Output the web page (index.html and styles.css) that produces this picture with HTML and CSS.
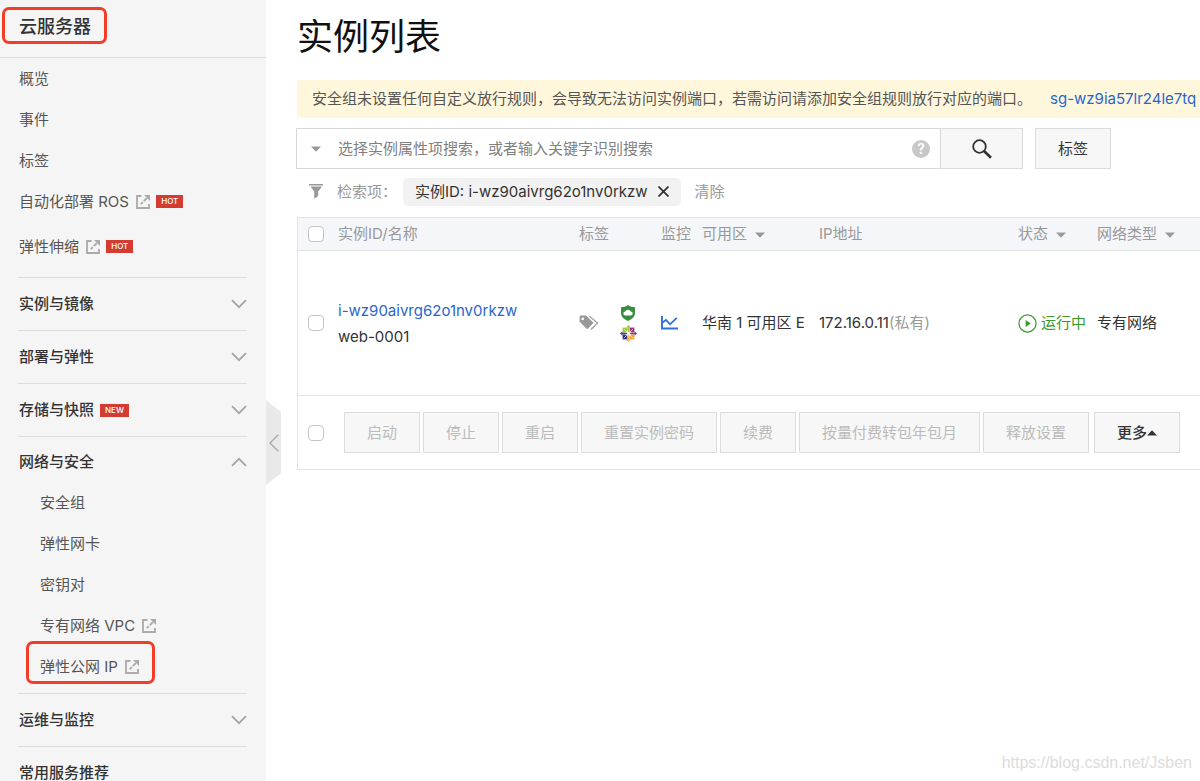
FILE: index.html
```html
<!DOCTYPE html>
<html lang="zh-CN">
<head>
<meta charset="utf-8">
<title>实例列表</title>
<link rel="stylesheet" href="styles.css">
</head>
<body>
<svg class="defs" aria-hidden="true">
  <symbol id="ext" viewBox="0 0 14 14"><path d="M5.500 1H1v12h12V9" fill="none" stroke="currentColor" stroke-width="1.800"/><path d="M4.800 9.200l2-2M7.800 6.200l3-3" fill="none" stroke="currentColor" stroke-width="1.900"/><path d="M8 0h6v6z" fill="currentColor"/></symbol>
  <symbol id="down" viewBox="0 0 16 10"><path d="M1 1.2l7 7 7-7" fill="none" stroke="currentColor" stroke-width="1.8"/></symbol>
  <symbol id="up" viewBox="0 0 16 10"><path d="M1 8.8l7-7 7 7" fill="none" stroke="currentColor" stroke-width="1.8"/></symbol>
  <symbol id="caret" viewBox="0 0 10 6"><path d="M0 .5h10L5 5.8z" fill="currentColor"/></symbol>
</svg>
<div class="app">
  <aside class="sidebar">
    <div class="side-title">云服务器</div>
    <nav class="side-nav" aria-label="云服务器">
      <ul class="menu">
        <li><a href="#">概览</a></li>
        <li><a href="#">事件</a></li>
        <li><a href="#">标签</a></li>
        <li><a href="#">自动化部署 ROS <svg class="ext"><use href="#ext"/></svg><span class="badge">HOT</span></a></li>
        <li class="spaced"><a href="#">弹性伸缩 <svg class="ext"><use href="#ext"/></svg><span class="badge">HOT</span></a></li>
      </ul>
      <section class="group"><button class="group-head" type="button"><span>实例与镜像</span><svg class="chev"><use href="#down"/></svg></button></section>
      <section class="group"><button class="group-head" type="button"><span>部署与弹性</span><svg class="chev"><use href="#down"/></svg></button></section>
      <section class="group"><button class="group-head" type="button"><span>存储与快照</span><span class="badge">NEW</span><svg class="chev"><use href="#down"/></svg></button></section>
      <section class="group open">
        <button class="group-head" type="button" aria-expanded="true"><span>网络与安全</span><svg class="chev"><use href="#up"/></svg></button>
        <ul class="submenu">
          <li><a href="#">安全组</a></li>
          <li><a href="#">弹性网卡</a></li>
          <li><a href="#">密钥对</a></li>
          <li><a href="#">专有网络 VPC <svg class="ext"><use href="#ext"/></svg></a></li>
          <li class="marked"><a href="#">弹性公网 IP <svg class="ext"><use href="#ext"/></svg></a></li>
        </ul>
      </section>
      <section class="group"><button class="group-head" type="button"><span>运维与监控</span><svg class="chev"><use href="#down"/></svg></button></section>
      <section class="group"><button class="group-head" type="button"><span>常用服务推荐</span></button></section>
    </nav>
  </aside>
  <main class="main">
    <button class="collapse" type="button" aria-label="收起菜单"><svg viewBox="0 0 10 18"><path d="M9.3.7L1 9l8.300 8.300" fill="none" stroke="currentColor" stroke-width="1.400"/></svg></button>
    <h1>实例列表</h1>
    <div class="alert"><span>安全组未设置任何自定义放行规则，会导致无法访问实例端口，若需访问请添加安全组规则放行对应的端口。</span><a href="#">sg-wz9ia57lr24le7tq</a></div>
    <form class="search">
      <div class="search-box">
        <button class="pick" type="button" aria-label="选择属性"><svg class="caret"><use href="#caret"/></svg></button>
        <input type="text" aria-label="搜索实例" placeholder="选择实例属性项搜索，或者输入关键字识别搜索">
        <span class="help">?</span>
      </div>
      <button class="btn go" type="button" aria-label="搜索"><svg viewBox="0 0 20 20"><circle cx="7.500" cy="7.500" r="6.300" fill="none" stroke="currentColor" stroke-width="1.800"/><path d="M12 12l7 6.800" stroke="currentColor" stroke-width="2.600"/></svg></button>
      <button class="btn tag-btn" type="button">标签</button>
    </form>
    <div class="filters">
      <svg class="funnel" viewBox="0 0 14 15"><path d="M0 0h14v1.500H0zM1.500 2.600h11.500L9.200 7.500V12l-4 2.800V7.500z" fill="currentColor"/></svg>
      <span class="filter-label">检索项：</span>
      <span class="chip">实例ID: i-wz90aivrg62o1nv0rkzw<button type="button" aria-label="移除"><svg viewBox="0 0 10 10"><path d="M.5.5l9 9M9.500.5l-9 9" stroke="currentColor" stroke-width="1.600"/></svg></button></span>
      <a class="clear" href="#">清除</a>
    </div>
    <table class="grid">
      <colgroup><col class="c-check"><col class="c-id"><col class="c-icon"><col class="c-icon"><col class="c-icon"><col class="c-zone"><col class="c-ip"><col class="c-state"><col></colgroup>
      <thead>
        <tr>
          <th class="check"><input type="checkbox" aria-label="全选"></th>
          <th>实例ID/名称</th><th>标签</th><th></th><th>监控</th>
          <th>可用区<svg class="caret"><use href="#caret"/></svg></th>
          <th>IP地址</th>
          <th>状态<svg class="caret"><use href="#caret"/></svg></th>
          <th>网络类型<svg class="caret"><use href="#caret"/></svg></th>
        </tr>
      </thead>
      <tbody>
        <tr>
          <td class="check"><input type="checkbox" aria-label="选择 web-0001"></td>
          <td class="name"><a href="#">i-wz90aivrg62o1nv0rkzw</a><span>web-0001</span></td>
          <td><svg class="tags" viewBox="0 0 20 16"><path d="M1.200 1h5.800l7 6.800-5.800 6L1 6.600z" fill="#999" stroke="#999" stroke-linejoin="round"/><circle cx="3.700" cy="3.900" r="1.300" fill="#fff"/><path d="M10.300 1.200l8.200 6.900-6.500 6.400" fill="none" stroke="#999" stroke-width="1.200"/><path d="M9 .9l7.200 7-6 6.400" fill="none" stroke="#fff" stroke-width="1"/></svg></td>
          <td>
            <div class="os">
              <svg class="shield" viewBox="0 0 14 16"><path d="M7 0c2 1.500 4.500 2.200 7 2.200v5.500c0 4-3 6.600-7 8.300-4-1.700-7-4.300-7-8.300V2.200C2.500 2.200 5 1.500 7 0z" fill="#3a8c3f"/><path d="M4.300 10.500a2 2 0 0 1 0-4 2.900 2.900 0 0 1 5.400 0 2 2 0 0 1 0 4z" fill="#fff"/></svg>
              <svg class="centos" viewBox="0 0 18 18"><path d="M9 0l3 3-3 5-3-5z" fill="#a3c644"/><path d="M18 9l-3 3-5-3 5-3z" fill="#8c3a86"/><path d="M9 18l-3-3 3-5 3 5z" fill="#efb34c"/><path d="M0 9l3-3 5 3-5 3z" fill="#41418f"/><path d="M2.500 2.500h5.300v5.300H2.500z" fill="#9ac23c" stroke="#fff" stroke-width=".5"/><path d="M10.200 2.500h5.300v5.300h-5.300z" fill="#93307e" stroke="#fff" stroke-width=".5"/><path d="M2.500 10.200h5.300v5.300H2.500z" fill="#2b2a7b" stroke="#fff" stroke-width=".5"/><path d="M10.200 10.200h5.300v5.300h-5.300z" fill="#eea42b" stroke="#fff" stroke-width=".5"/><path d="M4 4l10 10M14 4L4 14" stroke="#fff" stroke-width=".7"/></svg>
            </div>
          </td>
          <td><svg class="chart" viewBox="0 0 17 14"><path d="M1 0v12.500h16" fill="none" stroke="#2f6fd6" stroke-width="1.900"/><path d="M1.500 6.500L5 4l4 4.300 6.800-6.500" fill="none" stroke="#2f6fd6" stroke-width="1.800"/></svg></td>
          <td>华南 1 可用区 E</td>
          <td>172.16.0.11<span class="muted">(私有)</span></td>
          <td><span class="state"><svg viewBox="0 0 20 20"><circle cx="10" cy="10" r="9" fill="none" stroke="currentColor" stroke-width="1.300"/><path d="M8 6.200l5.500 3.800L8 13.800z" fill="currentColor"/></svg>运行中</span></td>
          <td>专有网络</td>
        </tr>
      </tbody>
      <tfoot>
        <tr>
          <td class="check"><input type="checkbox" aria-label="全选"></td>
          <td colspan="8">
            <div class="actions">
              <button class="btn" type="button" disabled>启动</button>
              <button class="btn" type="button" disabled>停止</button>
              <button class="btn" type="button" disabled>重启</button>
              <button class="btn" type="button" disabled>重置实例密码</button>
              <button class="btn" type="button" disabled>续费</button>
              <button class="btn" type="button" disabled>按量付费转包年包月</button>
              <button class="btn" type="button" disabled>释放设置</button>
              <button class="btn more" type="button">更多<svg viewBox="0 0 10 6"><path d="M0 5.500h10L5 .2z" fill="currentColor"/></svg></button>
            </div>
          </td>
        </tr>
      </tfoot>
    </table>
  </main>
  <div class="watermark">https://blog.csdn.net/Jsben</div>
</div>
</body>
</html>
```
FILE: styles.css
```css
*, *::before, *::after { box-sizing: border-box; }
body {
  margin: 0;
  font: 15px/22px Inter, "Noto Sans CJK SC", sans-serif;
  color: #333;
  background: #fff;
}
button, input { font: inherit; color: inherit; }
button { margin: 0; padding: 0; border: 0; background: none; }
a { color: #2a66cf; text-decoration: none; }
ul { list-style: none; margin: 0; padding: 0; }
svg { flex: none; }
.defs { position: absolute; width: 0; height: 0; }

.app { position: relative; display: flex; height: 100vh; overflow: hidden; }

.sidebar { flex: 0 0 266px; background: #f5f5f5; overflow: hidden; }
.side-title {
  position: relative;
  height: 58px;
  padding: 15px 19px;
  border-bottom: 1px solid #ddd;
  font-size: 18px;
  line-height: 24px;
  font-weight: 500;
}
.side-title::after, .marked::after {
  content: "";
  position: absolute;
  border: 3px solid #f23c27;
  border-radius: 7px;
  pointer-events: none;
}
.side-title::after { left: 2px; top: 7px; width: 105px; height: 37px; }
.marked { position: relative; }
.marked::after { left: -14px; top: -5px; width: 129px; height: 43px; }

.menu { padding: 0 19px 10px; }
.menu a, .submenu a { display: flex; align-items: center; height: 41px; color: #555; white-space: pre; }
.spaced { margin-top: 4px; }
.ext { width: 14px; height: 14px; margin-left: 3px; color: #aaa; }
.badge {
  margin-left: 6px;
  padding: 0 5px;
  background: #d23c33;
  color: #fff;
  font: 500 8px/13px Inter, sans-serif;
}
.group { margin: 0 19px 0 18px; border-top: 1px solid #ddd; }
.group-head { display: flex; align-items: center; width: 100%; height: 52px; padding: 0 0 0 1px; font-weight: 500; }
.chev { width: 16px; height: 10px; margin-left: auto; color: #a5a5a5; }
.open .group-head { height: 49px; }
.submenu { margin-top: -4px; padding: 0 0 6px 22px; }

.main { position: relative; flex: 1; min-width: 0; padding-left: 31px; }
.collapse {
  position: absolute;
  left: 0;
  top: 400px;
  width: 15px;
  height: 85px;
  background: #e9e9e9;
  clip-path: polygon(0 0, 100% 12px, 100% 73px, 0 100%);
  color: #aaa;
}
.collapse svg { display: block; width: 10px; height: 18px; margin-left: 3px; }
h1 { margin: 0; padding: 15px 0 21px; font-size: 36px; line-height: 44px; font-weight: 400; color: #111; }
.alert {
  display: flex;
  gap: 18px;
  height: 38px;
  padding-left: 15px;
  line-height: 38px;
  background: #fff7dc;
  color: #555;
  white-space: nowrap;
  overflow: hidden;
}
.search { display: flex; height: 41px; margin: 10px 0 0 -1px; }
.search-box { display: flex; align-items: center; width: 645px; border: 1px solid #d8d8d8; }
.pick { display: flex; justify-content: center; width: 41px; padding-right: 3px; color: #999; }
.caret { width: 10px; height: 6px; }
.search-box input { flex: 1; min-width: 0; padding: 0; border: 0; outline: 0; background: none; }
.search-box input::placeholder { color: #808080; opacity: 1; }
.help {
  width: 18px;
  margin-right: 10px;
  border-radius: 9px;
  background: #c8c8c8;
  color: #fff;
  font-size: 14px;
  font-weight: 600;
  line-height: 18px;
  text-align: center;
}
.btn { height: 41px; padding: 0 22px; border: 1px solid #dcdcdc; background: #f7f7f7; white-space: nowrap; }
.go { width: 82px; border-left: 0; }
.go svg { display: block; width: 20px; height: 20px; margin: auto; }
.tag-btn { margin-left: 12px; }
.btn:disabled { color: #bbb; }

.filters { display: flex; align-items: center; height: 27px; margin: 9px 0 12px; padding-left: 12px; color: #999; }
.funnel { width: 14px; height: 15px; margin-right: 14px; }
.filter-label { width: 66px; white-space: nowrap; }
.chip { display: flex; align-items: center; height: 28px; padding: 0 12px; border-radius: 5px; background: #f2f2f2; color: #333; white-space: nowrap; }
.chip button { display: flex; margin-left: 10px; }
.chip svg { width: 11px; height: 11px; }
.clear { margin-left: 14px; color: #999; }

.grid { width: 100%; table-layout: fixed; border-collapse: separate; border-spacing: 0; border: 1px solid #e3e3e3; border-right: 0; }
.c-check { width: 40px; }
.c-id { width: 241px; }
.c-icon { width: 41px; }
.c-zone { width: 117px; }
.c-ip { width: 199px; }
.c-state { width: 79px; }
th, td { padding: 0; text-align: left; vertical-align: middle; white-space: nowrap; }
th { height: 33px; background: #f4f6fa; border-bottom: 1px solid #e3e3e3; font-weight: 400; color: #999; }
th .caret { margin-left: 8px; vertical-align: 1px; }
tbody td { height: 145px; border-bottom: 1px solid #e3e3e3; }
tfoot td { height: 73px; }
.check { padding-left: 10px; }
.check input {
  appearance: none;
  display: block;
  width: 16px;
  height: 16px;
  margin: 0;
  border: 1px solid #c4c4c4;
  border-radius: 4px;
  background: #fff;
}
.name { padding-top: 2px; }
.name a, .name span { display: block; line-height: 26px; }
.tags { display: block; width: 20px; height: 16px; }
.os { display: flex; flex-direction: column; align-items: center; gap: 4px; width: 16px; }
.shield { width: 14px; height: 16px; }
.centos { width: 17px; height: 17px; }
.chart { display: block; width: 17px; height: 14px; }
.muted { color: #999; }
.state { display: flex; align-items: center; gap: 4px; color: #3a9a2c; }
.state svg { width: 19px; height: 19px; }
.actions { display: flex; gap: 3px; padding-left: 6px; }
.more { display: flex; align-items: center; margin-left: 2px; font-weight: 500; }
.more svg { width: 10px; height: 6px; }
.watermark {
  position: absolute;
  right: 8px;
  bottom: 8px;
  font: 16px/20px "Liberation Sans", sans-serif;
  color: #dcdcdc;
}
```
